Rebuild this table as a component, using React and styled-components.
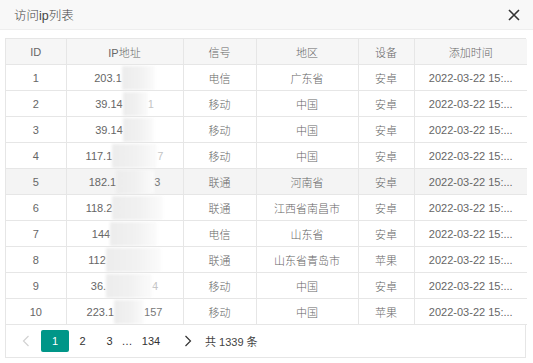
import React from "react";
import styled, { createGlobalStyle } from "styled-components";

const GlobalStyle = createGlobalStyle`
  html, body {
    margin: 0;
    padding: 0;
    background: #fff;
  }
  body {
    font-family: "Liberation Sans", Arial, "Noto Sans CJK SC", sans-serif;
  }
`;

const rows = [
  { id: 1, ip: ["203.1", 33, "", 0], sig: "电信", area: "广东省", dev: "安卓" },
  { id: 2, ip: ["39.14", 25, "1", 1], sig: "移动", area: "中国", dev: "安卓" },
  { id: 3, ip: ["39.14", 31, "", 0], sig: "移动", area: "中国", dev: "安卓" },
  { id: 4, ip: ["117.1", 45, "7", 1], sig: "移动", area: "中国", dev: "安卓" },
  { id: 5, ip: ["182.1", 38, "3", 0], sig: "联通", area: "河南省", dev: "安卓", hover: true },
  { id: 6, ip: ["118.2", 51, "", 0], sig: "联通", area: "江西省南昌市", dev: "安卓" },
  { id: 7, ip: ["144", 47, "", 0], sig: "电信", area: "山东省", dev: "安卓" },
  { id: 8, ip: ["112", 55, "", 0], sig: "联通", area: "山东省青岛市", dev: "苹果" },
  { id: 9, ip: ["36.", 46, "4", 1], sig: "移动", area: "中国", dev: "安卓" },
  { id: 10, ip: ["223.1", 30, "157", 0], sig: "移动", area: "中国", dev: "苹果" },
];

const columns = [
  { title: "ID", width: 60 },
  { title: "IP地址", width: 117 },
  { title: "信号", width: 73 },
  { title: "地区", width: 102 },
  { title: "设备", width: 56 },
  { title: "添加时间", width: 113 },
];

function Chevron({ dir, color }) {
  return (
    <svg width="8" height="12" viewBox="0 0 8 12">
      <polyline
        points={dir === "left" ? "6.5,1 1.5,6 6.5,11" : "1.5,1 6.5,6 1.5,11"}
        fill="none"
        stroke={color}
        strokeWidth="1.2"
      />
    </svg>
  );
}

function App() {
  return (
    <>
      <GlobalStyle />
      <Dialog>
        <TitleBar>
          <Title>访问ip列表</Title>
          <CloseBtn>
            <svg width="12" height="12" viewBox="0 0 12 12">
              <path d="M1 1L11 11M11 1L1 11" stroke="#333" strokeWidth="1.6" />
            </svg>
          </CloseBtn>
        </TitleBar>
        <Body>
          <TableBox>
            <Table>
              <colgroup>
                {columns.map((c) => (
                  <col key={c.title} style={{ width: c.width }} />
                ))}
              </colgroup>
              <thead>
                <HeadRow>
                  {columns.map((c) => (
                    <Th key={c.title}>{c.title}</Th>
                  ))}
                </HeadRow>
              </thead>
              <tbody>
                {rows.map((r) => (
                  <Row key={r.id} $hover={r.hover}>
                    <Td>{r.id}</Td>
                    <Td>
                      <IpText>
                        {r.ip[0]}
                        <Smudge $w={r.ip[1]} />
                        {r.ip[2] && <Tail $faint={r.ip[3]}>{r.ip[2]}</Tail>}
                      </IpText>
                    </Td>
                    <Td>{r.sig}</Td>
                    <Td>{r.area}</Td>
                    <Td>{r.dev}</Td>
                    <Td>2022-03-22 15:...</Td>
                  </Row>
                ))}
              </tbody>
            </Table>
            <Pager>
              <PageItem $w={28}>
                <Chevron dir="left" color="#d2d2d2" />
              </PageItem>
              <CurrentPage>1</CurrentPage>
              <PageItem $w={27}>2</PageItem>
              <PageItem $w={27}>3</PageItem>
              <PageItem $w={8}>…</PageItem>
              <PageItem $w={40}>134</PageItem>
              <PageItem $w={28} $ml={3}>
                <Chevron dir="right" color="#333" />
              </PageItem>
              <Count>共 1339 条</Count>
            </Pager>
          </TableBox>
        </Body>
      </Dialog>
    </>
  );
}

export default App;

const Dialog = styled.div`
  width: 533px;
  height: 363px;
  background: #fff;
  overflow: hidden;
`;

const TitleBar = styled.div`
  height: 30px;
  background: #f8f8f8;
  border-bottom: 1px solid #eee;
  display: flex;
  align-items: center;
  justify-content: space-between;
  padding: 0 13px 0 14px;
  box-sizing: border-box;
`;

const Title = styled.div`
  font-size: 12.5px;
  font-weight: 300;
  color: #444;
`;

const CloseBtn = styled.div`
  display: flex;
  align-items: center;
`;

const Body = styled.div`
  padding: 8px 7px 0 5px;
`;

const TableBox = styled.div`
  border: 1px solid #e6e6e6;
  width: 521px;
  box-sizing: border-box;
`;

const Table = styled.table`
  width: 100%;
  table-layout: fixed;
  border-collapse: collapse;
  font-size: 11px;
  font-weight: 300;
  color: #666;
`;

const HeadRow = styled.tr`
  background: #f6f6f6;
`;

const Th = styled.th`
  font-weight: 300;
  height: 25px;
  padding: 0;
  text-align: center;
  border-right: 1px solid #e6e6e6;
  border-bottom: 1px solid #e6e6e6;
  &:last-child {
    border-right: none;
  }
`;

const Row = styled.tr`
  background: ${(p) => (p.$hover ? "#f4f4f4" : "#fff")};
`;

const Td = styled.td`
  height: 25px;
  padding: 0;
  text-align: center;
  white-space: nowrap;
  overflow: hidden;
  border-right: 1px solid #e6e6e6;
  border-bottom: 1px solid #e6e6e6;
  &:last-child {
    border-right: none;
  }
`;

const IpText = styled.span`
  display: inline-flex;
  align-items: center;
`;

const Smudge = styled.span`
  display: inline-block;
  width: ${(p) => p.$w}px;
  height: 24px;
  background: linear-gradient(90deg, #ececec 0%, #f1f1f1 55%, #fbfbfb 100%);
  filter: blur(1.5px);
`;

const Tail = styled.span`
  color: ${(p) => (p.$faint ? "#c4c4c4" : "#777")};
`;

const Pager = styled.div`
  height: 32px;
  display: flex;
  align-items: center;
  padding-left: 6px;
  font-size: 11px;
  color: #333;
`;

const PageItem = styled.div`
  width: ${(p) => p.$w}px;
  margin-left: ${(p) => p.$ml || 0}px;
  height: 22px;
  display: flex;
  align-items: center;
  justify-content: center;
`;

const CurrentPage = styled.div`
  width: 28px;
  height: 22px;
  margin-left: 1px;
  border-radius: 2px;
  background: #009688;
  color: #fff;
  display: flex;
  align-items: center;
  justify-content: center;
`;

const Count = styled.div`
  margin-left: 3px;
  color: #444;
`;
